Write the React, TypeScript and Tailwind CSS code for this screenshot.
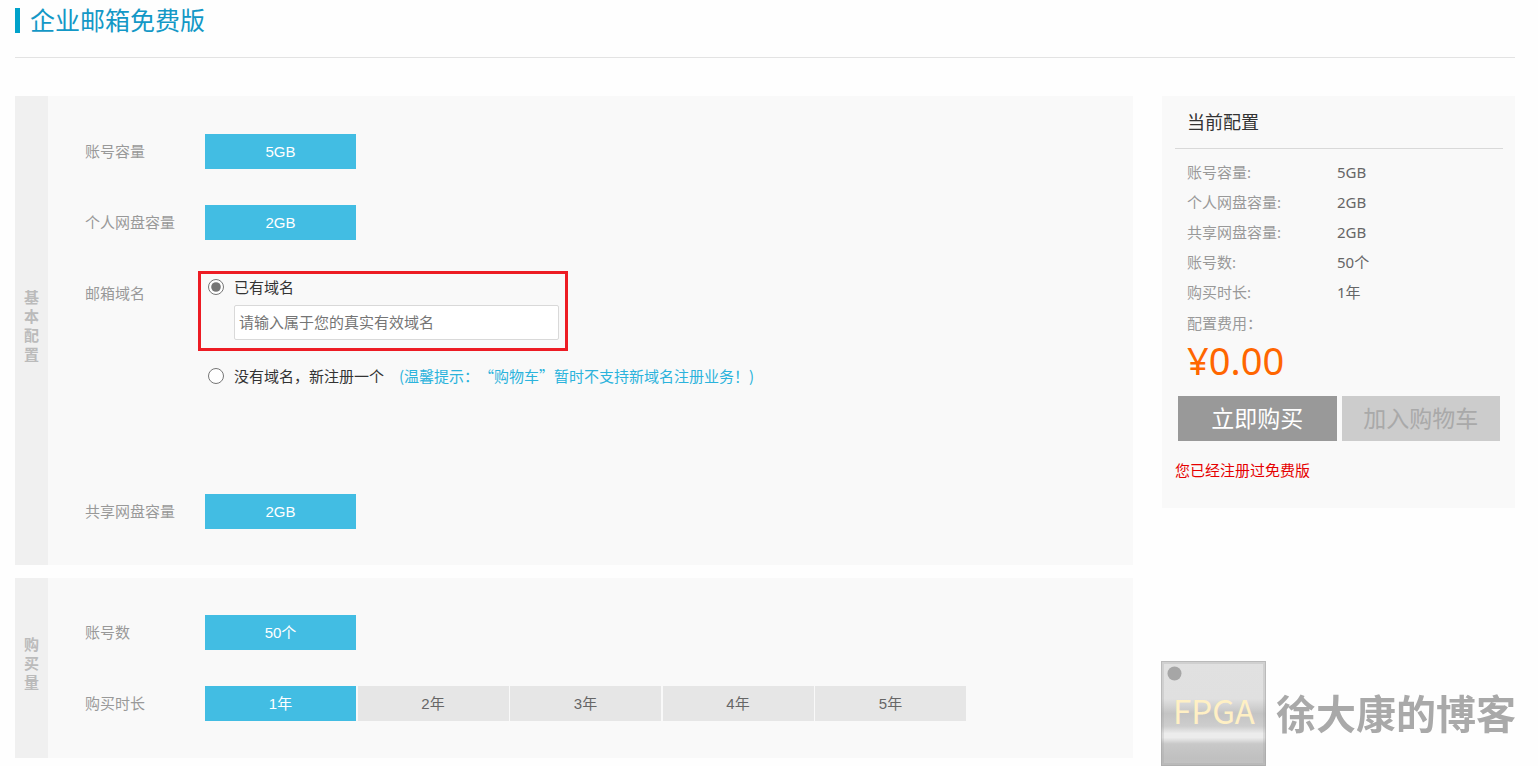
import { useState } from "react";
import type { ReactNode } from "react";
import clsx from "clsx";

const YEARS = [1, 2, 3, 4, 5];

type OptionButtonProps = {
  active?: boolean;
  onClick?: () => void;
  children: ReactNode;
};

const OptionButton = ({ active = true, onClick, children }: OptionButtonProps) => (
  <button
    type="button"
    onClick={onClick}
    className={clsx(
      "h-[35px] w-[151px] pt-[2px] text-[15px] font-['Liberation_Sans','Noto_Sans_CJK_SC',sans-serif]",
      active ? "bg-[#42bde3] text-white" : "bg-[#e6e6e6] text-[#666]"
    )}
  >
    {children}
  </button>
);

type PanelProps = {
  title: string;
  className: string;
  children: ReactNode;
};

const Panel = ({ title, className, children }: PanelProps) => (
  <section className="flex bg-[#f9f9f9]">
    <h2 className="flex w-[33px] shrink-0 items-center justify-center bg-[#f0f0f0] pb-3 font-bold text-[#bbb]">
      <span className="w-[15px] leading-[19px] break-all">{title}</span>
    </h2>
    <div className={clsx("flex flex-1 flex-col gap-9 pl-[37px]", className)}>
      {children}
    </div>
  </section>
);

const Row = ({ label, children }: { label: string; children: ReactNode }) => (
  <div className="flex items-start">
    <span className="w-[120px] shrink-0 leading-[33px] text-[#999]">{label}</span>
    {children}
  </div>
);

const Watermark = () => (
  <div className="pointer-events-none fixed right-[22px] bottom-0 flex items-center gap-[10px]">
    <svg width="105" height="105" viewBox="0 0 105 105">
      <defs>
        <linearGradient id="chip" x1="0" y1="0" x2="0" y2="1">
          <stop offset="0" stopColor="#e1e1e1" />
          <stop offset="0.36" stopColor="#e0e0e0" />
          <stop offset="0.5" stopColor="#c4c4c4" />
          <stop offset="0.62" stopColor="#cdcdcd" />
          <stop offset="0.69" stopColor="#ececec" />
          <stop offset="0.73" stopColor="#ececec" />
          <stop offset="0.79" stopColor="#c8c8c8" />
          <stop offset="0.93" stopColor="#c0c0c0" />
          <stop offset="1" stopColor="#c4c4c4" />
        </linearGradient>
      </defs>
      <rect width="105" height="105" fill="url(#chip)" />
      <rect x="1.5" y="1.5" width="102" height="102" fill="none" stroke="#a0a0a0" strokeOpacity="0.25" strokeWidth="3" />
      <rect x="0.5" y="0.5" width="104" height="104" fill="none" stroke="#a0a0a0" strokeOpacity="0.45" />
      <circle cx="13.5" cy="12.5" r="7" fill="#a6a6a6" />
      <text
        x="53"
        y="63"
        textAnchor="middle"
        fontSize="33"
        fill="#fff0c4"
        className="font-['Noto_Sans_CJK_SC',sans-serif]"
      >
        FPGA
      </text>
    </svg>
    <span className="pb-1 text-[40px] leading-[48px] font-bold text-[#a9a9a9]">
      徐大康的博客
    </span>
  </div>
);

const App = () => {
  const [domainType, setDomainType] = useState("own");
  const [years, setYears] = useState(1);

  const summary = [
    ["账号容量", "5GB"],
    ["个人网盘容量", "2GB"],
    ["共享网盘容量", "2GB"],
    ["账号数", "50个"],
    ["购买时长", `${years}年`],
  ];

  return (
    <div
      lang="zh-CN"
      className="min-h-screen bg-[#fefefe] pr-[23px] pb-2 pl-[15px] text-[15px] text-[#333] font-['Noto_Sans_CJK_SC',sans-serif]"
    >
      <header className="border-b border-[#e3e3e3] pt-2 pb-6">
        <h1 className="h-[25px] border-l-[5px] border-[#00a2ca] pl-[10px] text-[25px] leading-[23px] text-[#1398c6]">
          企业邮箱免费版
        </h1>
      </header>

      <div className="mt-[38px] flex items-start gap-[29px]">
        <main className="flex flex-1 flex-col gap-[13px]">
          <Panel title="基本配置" className="pt-[38px] pb-9">
            <Row label="账号容量">
              <OptionButton>5GB</OptionButton>
            </Row>
            <Row label="个人网盘容量">
              <OptionButton>2GB</OptionButton>
            </Row>
            <Row label="邮箱域名">
              <div className="h-[182px] pl-[3px]">
                <div className="relative w-fit">
                  <label className="flex h-[22px] items-center gap-[10px]">
                    <input
                      type="radio"
                      name="domain"
                      className="size-4 accent-[#767676]"
                      checked={domainType === "own"}
                      onChange={() => setDomainType("own")}
                    />
                    已有域名
                  </label>
                  <input
                    type="text"
                    aria-label="已有域名"
                    placeholder="请输入属于您的真实有效域名"
                    className="mt-[7px] ml-[26px] block h-[35px] w-[325px] rounded-[2px] border border-[#d9d9d9] bg-white px-1 pb-[2px] placeholder:text-[#757575]"
                  />
                  {/* highlight around the own-domain option */}
                  <div className="pointer-events-none absolute -top-[5px] -right-[9px] -bottom-[11px] -left-[10px] border-3 border-[#ed1c24]" />
                </div>
                <div className="mt-[25px] flex h-[22px] items-center gap-[15px]">
                  <label className="flex items-center gap-[10px]">
                    <input
                      type="radio"
                      name="domain"
                      className="size-4 accent-[#767676]"
                      checked={domainType === "new"}
                      onChange={() => setDomainType("new")}
                    />
                    没有域名，新注册一个
                  </label>
                  <span className="text-[#2bb3dc] [text-spacing-trim:space-all]">
                    (温馨提示：“购物车”暂时不支持新域名注册业务！)
                  </span>
                </div>
              </div>
            </Row>
            <Row label="共享网盘容量">
              <OptionButton>2GB</OptionButton>
            </Row>
          </Panel>

          <Panel title="购买量" className="py-[37px]">
            <Row label="账号数">
              <OptionButton>50个</OptionButton>
            </Row>
            <Row label="购买时长">
              <div className="flex w-[761px] justify-between">
                {YEARS.map((year) => (
                  <OptionButton
                    key={year}
                    active={year === years}
                    onClick={() => setYears(year)}
                  >
                    {year}年
                  </OptionButton>
                ))}
              </div>
            </Row>
          </Panel>
        </main>

        <aside className="w-[353px] shrink-0 bg-[#f9f9f9] pr-3 pb-[27px] pl-[13px] font-['Noto_Sans','Noto_Sans_CJK_SC',sans-serif]">
          <h2 className="border-b border-[#d9d9d9] px-3 text-[18px] leading-[52px]">
            当前配置
          </h2>
          <dl className="mt-2 px-3 leading-[30px]">
            {summary.map(([name, value]) => (
              <div key={name} className="flex">
                <dt className="w-[150px] text-[#999]">{name}:</dt>
                <dd className="text-[#666]">{value}</dd>
              </div>
            ))}
            <dt className="pt-px text-[#999]">配置费用：</dt>
            <dd className="text-[38px] leading-[45px] text-[#ff6600]">¥0.00</dd>
          </dl>
          <div className="mt-[13px] flex gap-[5px] px-[3px] text-[23px]">
            <button type="button" className="h-[45px] flex-1 bg-[#999] text-white">
              立即购买
            </button>
            <button type="button" disabled className="h-[45px] flex-1 bg-[#ccc] text-[#a9a9a9]">
              加入购物车
            </button>
          </div>
          <p className="mt-[18px] leading-[22px] text-[#e60000]">
            您已经注册过免费版
          </p>
        </aside>
      </div>
      <Watermark />
    </div>
  );
};

export default App;
